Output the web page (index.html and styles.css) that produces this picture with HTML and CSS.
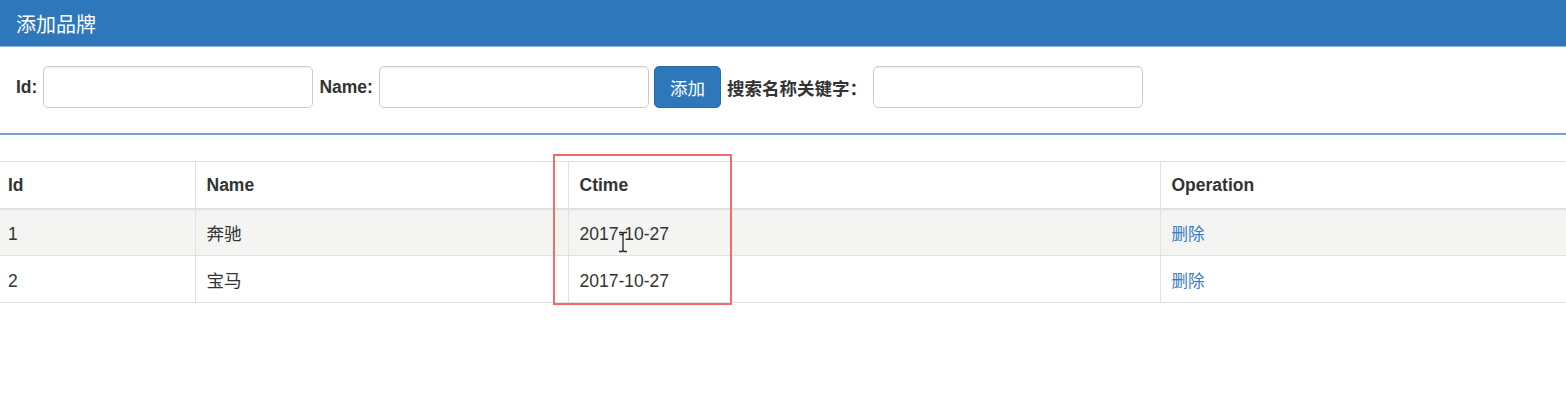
FILE: index.html
```html
<!DOCTYPE html>
<html lang="zh-CN">
<head>
  <meta charset="UTF-8">
  <meta name="viewport" content="width=device-width, initial-scale=1.0">
  <title>品牌管理</title>
  <link rel="stylesheet" href="styles.css">
</head>
<body>
  <div class="app">
    <!-- Add brand panel -->
    <div class="panel">
      <div class="panel-heading">
        <h3 class="panel-title">添加品牌</h3>
      </div>
      <div class="panel-body">
        <label class="form-label">Id:</label>
        <input type="text" class="form-control">
        <label class="form-label">Name:</label>
        <input type="text" class="form-control">
        <button class="btn">添加</button>
        <label class="form-label">搜索名称关键字：</label>
        <input type="text" class="form-control">
      </div>
    </div>

    <!-- Brand list -->
    <table class="table">
      <thead>
        <tr>
          <th class="col-id">Id</th>
          <th class="col-name">Name</th>
          <th class="col-time">Ctime</th>
          <th class="col-op">Operation</th>
        </tr>
      </thead>
      <tbody>
        <tr>
          <td>1</td>
          <td>奔驰</td>
          <td>2017-10-27</td>
          <td><a href="#">删除</a></td>
        </tr>
        <tr>
          <td>2</td>
          <td>宝马</td>
          <td>2017-10-27</td>
          <td><a href="#">删除</a></td>
        </tr>
      </tbody>
    </table>

    <!-- annotation over the Ctime column -->
    <div class="mark"></div>
    <svg class="cursor" width="12" height="22" viewBox="0 0 12 22">
      <path d="M2 1.5h3l1 1 1-1h3M6 2.5v17M2 20.5h3l1-1 1 1h3" fill="none" stroke="#222" stroke-width="1.3"/>
    </svg>
  </div>
</body>
</html>
```

FILE: styles.css
```css
:root {
  --primary: #2e77bb;
  --text: #333;
  --line: #e1e1e1;
  --stripe: #f4f4f3;
}
* { box-sizing: border-box; }
body {
  margin: 0;
  background: #fff;
  color: var(--text);
  font-family: "Liberation Sans", Arial, "Noto Sans CJK SC", sans-serif;
  font-size: 17.5px;
}
.app { position: relative; min-height: 395px; }

.panel {
  border-bottom: 2px solid #74a4d1;
}
.panel-heading {
  background: var(--primary);
  height: 47px;
  padding: 0 16px;
  display: flex;
  align-items: center;
  border-bottom: 1px solid #8db4da;
}
.panel-title {
  margin: 0;
  color: #fff;
  font-size: 20px;
  font-weight: normal;
  font-family: "Noto Sans CJK SC", sans-serif;
}
.panel-body {
  display: flex;
  align-items: center;
  padding: 19px 16px 25px;
}
.form-label {
  font-weight: bold;
  font-family: "Liberation Sans", "Noto Sans CJK SC", sans-serif;
  margin-right: 6px;
  margin-left: 6px;
}
.form-label:first-child { margin-left: 0; }
.form-control {
  width: 270px;
  height: 42px;
  border: 1px solid #ccc;
  border-radius: 5px;
  box-shadow: inset 0 1px 1px rgba(0,0,0,0.075);
  font-size: 17.5px;
}
.btn {
  margin-left: 5px;
  width: 67px;
  height: 42px;
  background: var(--primary);
  color: #fff;
  border: 1px solid #2a6aa6;
  border-radius: 5px;
  font-size: 17.5px;
  font-family: "Noto Sans CJK SC", sans-serif;
  cursor: pointer;
}

.table {
  width: 100%;
  margin-top: 26px;
  border-collapse: collapse;
  font-size: 17.5px;
}
.table th, .table td {
  text-align: left;
  height: 47px;
  line-height: 26px;
  padding: 0 11px;
  border: 1px solid var(--line);
  border-left-color: #e8e8e8;
  font-family: "Liberation Sans", "Noto Sans CJK SC", sans-serif;
}
.table td { padding-top: 3px; }
.table th:first-child, .table td:first-child { padding-left: 8px; border-left: none; }
.table th:last-child, .table td:last-child { border-right: none; }
.table thead th { border-bottom: 2px solid var(--line); }
.table tbody tr:nth-child(odd) { background: var(--stripe); }
.col-id { width: 195px; }
.col-name { width: 373px; }
.col-time { width: 592px; }
.table a { color: #3a7bbf; text-decoration: none; font-size: 16.5px; }

.mark {
  position: absolute;
  z-index: 2;
  left: 553px;
  top: 154px;
  width: 179px;
  height: 151px;
  border: 2px solid #f26a6a;
}
.cursor {
  position: absolute;
  z-index: 3;
  left: 617px;
  top: 231px;
}
```
